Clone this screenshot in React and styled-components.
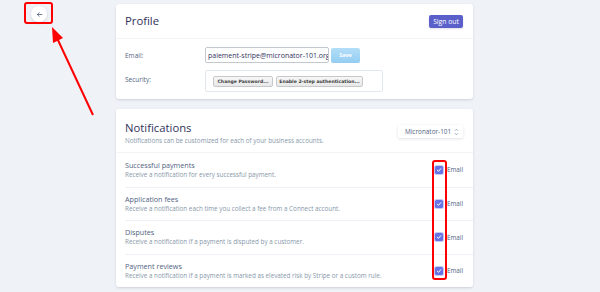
import React from 'react';
import styled, { createGlobalStyle } from 'styled-components';

const GlobalStyle = createGlobalStyle`
  html, body {
    margin: 0;
    padding: 0;
    background: #eff2f7;
    font-family: "Open Sans", "Noto Sans", sans-serif;
  }
  * { box-sizing: border-box; }
`;

const Page = styled.div`
  position: relative;
  width: 600px;
  height: 292px;
  overflow: hidden;
  display: flex;
  padding-top: 4px;
`;

const Side = styled.div`
  width: 116px;
  flex-shrink: 0;
  padding: 2px 0 0 31px;
`;

const BackButton = styled.button`
  width: 16px;
  height: 16px;
  border-radius: 50%;
  border: none;
  background: #ffffff;
  box-shadow: 0 1px 3px rgba(50, 50, 93, 0.18);
  display: flex;
  align-items: center;
  justify-content: center;
  padding: 0;
`;

const Main = styled.div`
  width: 357px;
  display: flex;
  flex-direction: column;
  gap: 10px;
`;

const Card = styled.div`
  background: #ffffff;
  border-radius: 3px;
  box-shadow: 0 1px 3px rgba(50, 50, 93, 0.12), 0 1px 1px rgba(0, 0, 0, 0.04);
`;

const CardHeader = styled.div`
  display: flex;
  align-items: ${p => (p.$tall ? 'flex-start' : 'center')};
  justify-content: space-between;
  height: ${p => (p.$tall ? '44px' : '35px')};
  padding: ${p => (p.$tall ? '12px 10px 0 9px' : '0 10px 0 9px')};
  border-bottom: 1px solid #f2f4f8;
`;

const Title = styled.h1`
  margin: 0;
  font-size: 11.3px;
  font-weight: 500;
  color: #32325d;
  line-height: 14px;
`;

const Subtitle = styled.p`
  margin: 0;
  font-size: 6.3px;
  color: #8898aa;
  line-height: 9px;
`;

const PrimaryButton = styled.button`
  border: none;
  border-radius: 2px;
  background: #5b5fc9;
  color: #ffffff;
  font-family: "Open Sans", sans-serif;
  font-size: 6.8px;
  font-weight: 500;
  height: 13px;
  width: 34px;
  padding: 0;
  box-shadow: 0 1px 2px rgba(50, 50, 93, 0.15);
`;

const ProfileBody = styled.div`
  padding: 8px 10px 7px 9px;
  display: flex;
  flex-direction: column;
  gap: 7px;
`;

const FieldRow = styled.div`
  display: flex;
  align-items: ${p => (p.$top ? 'flex-start' : 'center')};
`;

const Label = styled.span`
  width: 80px;
  font-size: 6.5px;
  color: #525f7f;
  padding-top: ${p => (p.$top ? '5px' : '0')};
`;

const EmailInput = styled.div`
  width: 124px;
  height: 16px;
  border: 1px solid #c4c9d1;
  border-radius: 2px;
  font-size: 7px;
  color: #32325d;
  display: flex;
  align-items: center;
  padding-left: 2px;
  white-space: nowrap;
  overflow: hidden;
`;

const SaveButton = styled.button`
  margin-left: 2px;
  width: 29px;
  height: 15px;
  border: none;
  border-radius: 2px;
  background: linear-gradient(#b3def8, #93cdf1);
  color: #ffffff;
  font-family: "Open Sans", sans-serif;
  font-size: 5.5px;
  font-weight: 700;
  padding: 0;
`;

const SecurityBox = styled.div`
  width: 178px;
  height: 22px;
  border: 1px solid #e3e8ee;
  border-radius: 2px;
  display: flex;
  align-items: center;
  gap: 3px;
  padding-left: 7px;
`;

const GreyButton = styled.button`
  height: 11px;
  width: ${p => p.$w}px;
  padding: 0;
  border: 1px solid #c6c8cc;
  border-radius: 2px;
  background: linear-gradient(#f7f7f7, #e8e8e8);
  font-family: "DejaVu Sans", sans-serif;
  font-size: 4.6px;
  font-weight: 700;
  color: #3c3c3c;
  white-space: nowrap;
`;

const HeaderText = styled.div`
  display: flex;
  flex-direction: column;
  gap: 1px;
`;

const Select = styled.div`
  margin-top: 4px;
  width: 65px;
  height: 13px;
  background: #ffffff;
  border-radius: 2px;
  box-shadow: 0 1px 3px rgba(50, 50, 93, 0.14);
  display: flex;
  align-items: center;
  justify-content: space-between;
  padding: 0 4px 0 7px;
  font-size: 6.4px;
  color: #525f7f;
`;

const NotifRow = styled.div`
  margin-left: 9px;
  height: 33.5px;
  display: flex;
  align-items: center;
  justify-content: space-between;
  padding-right: 10px;
  border-top: ${p => (p.$first ? 'none' : '1px solid #eef1f5')};
`;

const RowText = styled.div`
  display: flex;
  flex-direction: column;
  margin-top: -1px;
`;

const RowTitle = styled.span`
  font-size: 7.2px;
  font-weight: 500;
  color: #525f7f;
  line-height: 10px;
`;

const RowDesc = styled.span`
  font-size: 6.3px;
  color: #8898aa;
  line-height: 9px;
`;

const CheckLabel = styled.label`
  display: flex;
  align-items: center;
  gap: 4px;
  font-size: 6.3px;
  color: #525f7f;
`;

const CheckBox = styled.span`
  width: 8px;
  height: 8px;
  border-radius: 1.5px;
  background: #6772e5;
  display: flex;
  align-items: center;
  justify-content: center;
  box-shadow: 0 0 0 1px #c9cdf5;
`;

const Highlight = styled.div`
  position: absolute;
  border: 2px solid #ff0000;
  border-radius: 3px;
  pointer-events: none;
`;

const ArrowLayer = styled.svg`
  position: absolute;
  left: 0;
  top: 0;
  pointer-events: none;
`;

const rows = [
  { title: 'Successful payments', desc: 'Receive a notification for every successful payment.' },
  { title: 'Application fees', desc: 'Receive a notification each time you collect a fee from a Connect account.' },
  { title: 'Disputes', desc: 'Receive a notification if a payment is disputed by a customer.' },
  { title: 'Payment reviews', desc: 'Receive a notification if a payment is marked as elevated risk by Stripe or a custom rule.' },
];

function Check() {
  return (
    <CheckBox>
      <svg width="6" height="6" viewBox="0 0 12 12">
        <path d="M2.5 6.2 L5 8.6 L9.6 3.4" fill="none" stroke="#fff" strokeWidth="2" strokeLinecap="round" strokeLinejoin="round" />
      </svg>
    </CheckBox>
  );
}

export default function App() {
  return (
    <>
      <GlobalStyle />
      <Page>
        <Side>
          <BackButton aria-label="Back">
            <svg width="7" height="7" viewBox="0 0 12 12">
              <path d="M10 6 H2.5 M5.5 2.8 L2.3 6 L5.5 9.2" fill="none" stroke="#525f7f" strokeWidth="1.4" strokeLinecap="round" strokeLinejoin="round" />
            </svg>
          </BackButton>
        </Side>

        <Main>
          <Card>
            <CardHeader>
              <Title>Profile</Title>
              <PrimaryButton>Sign out</PrimaryButton>
            </CardHeader>
            <ProfileBody>
              <FieldRow>
                <Label>Email:</Label>
                <EmailInput>paiement-stripe@micronator-101.org</EmailInput>
                <SaveButton>Save</SaveButton>
              </FieldRow>
              <FieldRow $top>
                <Label $top>Security:</Label>
                <SecurityBox>
                  <GreyButton $w={60}>Change Password...</GreyButton>
                  <GreyButton $w={87}>Enable 2-step authentication...</GreyButton>
                </SecurityBox>
              </FieldRow>
            </ProfileBody>
          </Card>

          <Card>
            <CardHeader $tall>
              <HeaderText>
                <Title>Notifications</Title>
                <Subtitle>Notifications can be customized for each of your business accounts.</Subtitle>
              </HeaderText>
              <Select>
                <span>Micronator-101</span>
                <svg width="5" height="8" viewBox="0 0 6 10">
                  <path d="M1 3.5 L3 1.5 L5 3.5 M1 6.5 L3 8.5 L5 6.5" fill="none" stroke="#8898aa" strokeWidth="1" />
                </svg>
              </Select>
            </CardHeader>
            {rows.map((r, i) => (
              <NotifRow key={r.title} $first={i === 0}>
                <RowText>
                  <RowTitle>{r.title}</RowTitle>
                  <RowDesc>{r.desc}</RowDesc>
                </RowText>
                <CheckLabel>
                  <Check />
                  Email
                </CheckLabel>
              </NotifRow>
            ))}
          </Card>
        </Main>

        <Highlight style={{ left: 24, top: 2, width: 29, height: 22 }} />
        <Highlight style={{ left: 432, top: 160, width: 15, height: 120 }} />
        <ArrowLayer width="600" height="292">
          <line x1="93" y1="115" x2="57" y2="38" stroke="#ff0000" strokeWidth="2" />
          <polygon points="52,27 63,38 53,43" fill="#ff0000" />
        </ArrowLayer>
      </Page>
    </>
  );
}
